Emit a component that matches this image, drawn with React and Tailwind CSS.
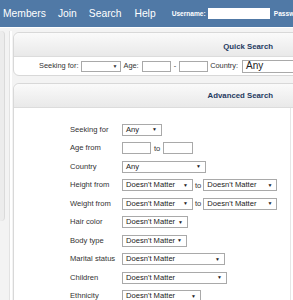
const font = { fontFamily: '"Liberation Sans", Arial, sans-serif' }

function Select({ w, text, big }) {
  return (
    <div
      className={`flex items-center justify-between bg-white border border-[#a9a9a9] text-[#222] whitespace-nowrap overflow-hidden ${big ? 'h-[13px] text-[10px] pl-[3px]' : 'h-[12px] text-[7.6px] pl-[3px] pr-[4px]'}`}
      style={{ width: w }}
    >
      <span className="leading-none">{text}</span>
      {!big && <span className="text-[5px] leading-none">▼</span>}
    </div>
  )
}

function Input({ w, h = 12 }) {
  return <div className="bg-white border border-[#a9a9a9]" style={{ width: w, height: h }} />
}

function Row({ label, children }) {
  return (
    <div className="flex items-center h-[18.5px]">
      <span className="w-[52px] text-[7.6px] text-[#333] leading-none whitespace-nowrap">{label}</span>
      <div className="flex items-center">{children}</div>
    </div>
  )
}

function PanelHead({ title, h, top = 0 }) {
  return (
    <div
      className="flex items-center justify-end pr-[79px] rounded-t-[6px] border-b border-[#dcdcdc] bg-gradient-to-b from-[#fafafa] to-[#e9e9e9]"
      style={{ height: h, paddingTop: top }}
    >
      <span className="text-[7.8px] font-bold text-[#1f3a5f] whitespace-nowrap">{title}</span>
    </div>
  )
}

export default function App() {
  const dm = "Doesn't Matter"
  return (
    <div className="w-[293px] h-[300px] overflow-hidden bg-[#f3f3f3]" style={font}>
      <div className="w-[360px]">
        {/* top nav */}
        <div className="h-[27px] bg-[#5079a6] flex items-center pl-[3px] text-white">
          <span className="text-[10.3px]">Members</span>
          <span className="text-[10.3px] ml-[12px]">Join</span>
          <span className="text-[10.3px] ml-[12px]">Search</span>
          <span className="text-[10.3px] ml-[13px]">Help</span>
          <span className="text-[6.6px] font-bold ml-[16px]">Username:</span>
          <div className="ml-[2px] w-[62px] h-[11px] bg-white" />
          <span className="text-[6.6px] font-bold ml-[4px]">Password:</span>
        </div>
        <div className="h-px bg-white" />

        <div className="flex pt-[3px]">
          {/* left column edge */}
          <div className="w-[5px] h-[190px] bg-[#ececec] border-r border-[#dadada] rounded-br-[4px] rounded-tr-[4px]" />
          <div className="ml-[4px] border-l border-[#e2e2e2] bg-white w-[3px] h-[272px]" />

          <div className="flex flex-col gap-[7px] ml-[1px] pt-[1px]">
            {/* quick search */}
            <div className="w-[340px] rounded-[6px] border border-[#d8d8d8] bg-white">
              <PanelHead title="Quick Search" h={24} top={5} />
              <div className="flex items-center h-[18px] text-[7.4px] text-[#333] pl-[25px] whitespace-nowrap">
                <span>Seeking for:</span>
                <div className="ml-[3px] w-[40px] h-[11px] bg-white border border-[#a9a9a9] flex items-center justify-end pr-[3px]">
                  <span className="text-[5px] leading-none">▼</span>
                </div>
                <span className="ml-[2px]">Age:</span>
                <div className="ml-[3px]"><Input w={29} h={11} /></div>
                <span className="mx-[3px]">-</span>
                <Input w={29} h={11} />
                <span className="ml-[2px]">Country:</span>
                <div className="ml-[4px]"><Select w={80} text="Any" big /></div>
              </div>
            </div>

            {/* advanced search */}
            <div className="w-[340px] rounded-t-[6px] border border-[#d8d8d8] bg-white">
              <PanelHead title="Advanced Search" h={24} />
              <div className="w-[277px] border-r border-[#e6e6e6] pt-[12.5px] pl-[56px] h-[220px]">
                <Row label="Seeking for"><Select w={40} text="Any" /></Row>
                <Row label="Age from">
                  <Input w={29} />
                  <span className="text-[7.6px] text-[#333] mx-[3px]">to</span>
                  <Input w={30} />
                </Row>
                <Row label="Country"><Select w={84} text="Any" /></Row>
                <Row label="Height from">
                  <Select w={71} text={dm} />
                  <span className="text-[7.6px] text-[#333] mx-[2px]">to</span>
                  <Select w={74} text={dm} />
                </Row>
                <Row label="Weight from">
                  <Select w={71} text={dm} />
                  <span className="text-[7.6px] text-[#333] mx-[2px]">to</span>
                  <Select w={74} text={dm} />
                </Row>
                <Row label="Hair color"><Select w={66} text={dm} /></Row>
                <Row label="Body type"><Select w={65} text={dm} /></Row>
                <Row label="Marital status"><Select w={103} text={dm} /></Row>
                <Row label="Children"><Select w={105} text={dm} /></Row>
                <Row label="Ethnicity"><Select w={79} text={dm} /></Row>
              </div>
            </div>
          </div>
        </div>
      </div>
    </div>
  )
}
